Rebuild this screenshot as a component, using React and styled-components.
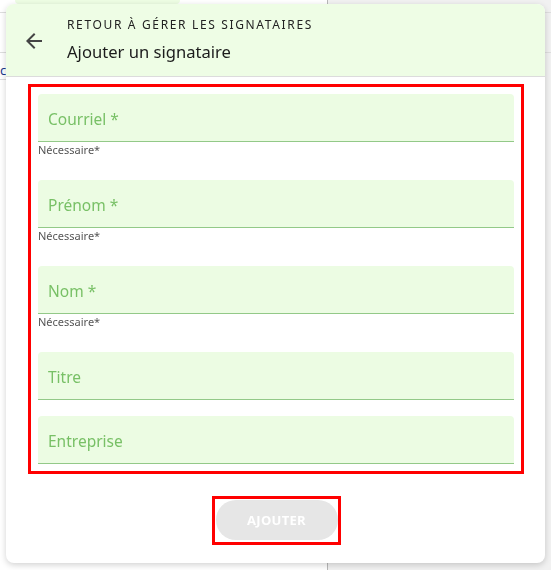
import React from "react";
import styled, { createGlobalStyle } from "styled-components";

const GlobalStyle = createGlobalStyle`
    html, body {
        margin: 0;
        padding: 0;
        background: #ffffff;
        font-family: "Noto Sans", "Open Sans", sans-serif;
    }
`;

// page that sits behind the dialog
const Backdrop = styled.div`
    width: 551px;
    height: 570px;
    display: flex;
    overflow: hidden;
`;
const BackLeft = styled.div`
    width: 327px;
    display: flex;
    flex-direction: column;
    border-right: 1px solid #b8b8b8;
`;
const BackTab = styled.div`
    margin-left: 15px;
    width: 165px;
    height: 4px;
    background: #edfde3;
    border-radius: 0 0 10px 10px;
`;
const BackRow = styled.div`
    height: ${(p) => p.h}px;
    border-bottom: 1px solid #dedede;
    font-size: 13px;
    color: #1a3a8a;
    display: flex;
    align-items: flex-end;
`;
const BackRight = styled.div`
    flex: 1;
    background: #f1f1f1;
    display: flex;
    flex-direction: column;
`;

// the dialog
const Dialog = styled.div`
    position: fixed;
    left: 6px;
    top: 4px;
    width: 539px;
    height: 559px;
    background: #ffffff;
    border-radius: 8px;
    box-shadow: 0 2px 6px rgba(0, 0, 0, 0.18);
    overflow: hidden;
    display: flex;
    flex-direction: column;
`;
const Header = styled.div`
    height: 73px;
    flex-shrink: 0;
    background: #eefde5;
    border-bottom: 1px solid #dcdcdc;
    display: flex;
    align-items: center;
    padding-left: 16px;
    box-sizing: border-box;
`;
const BackButton = styled.div`
    width: 24px;
    height: 24px;
    margin-right: 21px;
    margin-top: 2px;
    color: #444;
    cursor: pointer;
`;
const Titles = styled.div`
    display: flex;
    flex-direction: column;
    margin-top: 1px;
`;
const Overline = styled.div`
    font-size: 12px;
    line-height: 16px;
    letter-spacing: 1.65px;
    color: #222;
    margin-bottom: 7px;
`;
const Title = styled.div`
    font-size: 16.6px;
    line-height: 24px;
    color: #1c1c1c;
`;
const Body = styled.div`
    padding: 7px 21px 0 22px;
    display: flex;
    flex-direction: column;
    align-items: center;
`;
const FormBox = styled.div`
    width: 100%;
    box-sizing: border-box;
    border: 3px solid #ff0000;
    padding: 7px;
    display: flex;
    flex-direction: column;
`;
const Field = styled.div`
    height: 48px;
    flex-shrink: 0;
    background: #ecfce3;
    border-radius: 4px 4px 0 0;
    border-bottom: 1px solid #93c988;
    box-sizing: border-box;
    display: flex;
    align-items: center;
    padding-left: 10px;
    margin-bottom: ${(p) => (p.last ? 0 : p.helper ? 0 : 16)}px;
`;
const Label = styled.span`
    font-size: 15.5px;
    color: #78c066;
    margin-top: 2px;
`;
const Helper = styled.div`
    font-size: 11px;
    line-height: 14px;
    color: #555;
    margin-top: 1px;
    height: 21px;
    margin-bottom: 16px;
    flex-shrink: 0;
`;
const ButtonBox = styled.div`
    margin-top: 22px;
    border: 3px solid #ff0000;
    padding: 1px 0 2px 1px;
`;
const AddButton = styled.button`
    width: 122px;
    height: 40px;
    border: none;
    border-radius: 20px;
    background: #e6e6e6;
    color: #ffffff;
    font-family: "Open Sans", "Noto Sans", sans-serif;
    font-weight: 700;
    font-size: 13px;
    letter-spacing: 0.3px;
    display: block;
`;

const ArrowBack = () => (
    <svg width="24" height="24" viewBox="0 0 24 24" fill="currentColor">
        <path d="M20 11H7.83l5.59-5.59L12 4l-8 8 8 8 1.41-1.41L7.83 13H20v-2z" />
    </svg>
);

const fields = [
    { label: "Courriel *", required: true },
    { label: "Prénom *", required: true },
    { label: "Nom *", required: true },
    { label: "Titre" },
    { label: "Entreprise" },
];

const App = () => {
    return (
        <>
            <GlobalStyle />
            <Backdrop>
                <BackLeft>
                    <BackTab />
                    <BackRow h={8} />
                    <BackRow h={39} />
                    <BackRow h={26}>ct</BackRow>
                </BackLeft>
                <BackRight>
                    <BackRow h={12} />
                    <BackRow h={39} />
                </BackRight>
            </Backdrop>
            <Dialog>
                <Header>
                    <BackButton>
                        <ArrowBack />
                    </BackButton>
                    <Titles>
                        <Overline>RETOUR À GÉRER LES SIGNATAIRES</Overline>
                        <Title>Ajouter un signataire</Title>
                    </Titles>
                </Header>
                <Body>
                    <FormBox>
                        {fields.map((f, i) => (
                            <React.Fragment key={f.label}>
                                <Field helper={f.required} last={i === fields.length - 1}>
                                    <Label>{f.label}</Label>
                                </Field>
                                {f.required && <Helper>Nécessaire*</Helper>}
                            </React.Fragment>
                        ))}
                    </FormBox>
                    <ButtonBox>
                        <AddButton disabled>AJOUTER</AddButton>
                    </ButtonBox>
                </Body>
            </Dialog>
        </>
    );
};

export default App;
